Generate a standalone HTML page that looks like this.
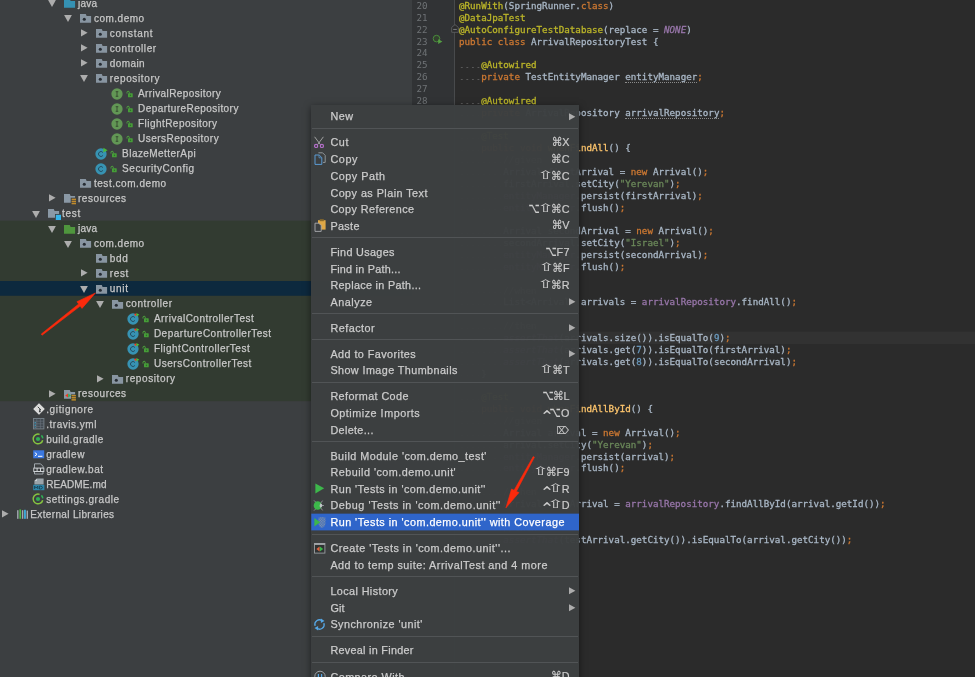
<!DOCTYPE html>
<html lang="en"><head><meta charset="utf-8"><title>IntelliJ IDEA - Run Tests with Coverage</title>
<style>
html,body{margin:0;padding:0;background:#3c3f41;}
body{width:975px;height:677px;overflow:hidden;position:relative;font-family:"Liberation Sans",sans-serif;}
.i{position:absolute;overflow:visible;}
#tree{will-change:transform;position:absolute;left:0;top:0;width:412px;height:677px;background:#3c3f41;overflow:hidden;}
.grn{position:absolute;left:0;width:412px;background:#323b31;}
.sel{position:absolute;left:0;width:412px;background:#0d293e;}
.t{position:absolute;font-size:10px;line-height:15px;height:15px;color:#c8c8c8;white-space:pre;-webkit-text-stroke:0.25px #c8c8c8;}
#ed{will-change:transform;position:absolute;left:412px;top:0;width:563px;height:677px;background:#2b2b2b;overflow:hidden;}
#ed .i, #ed .cl, #ed .ln, #ed .caret, #ed .gut, #ed .gl{margin-left:-412px;}
.gut{position:absolute;left:412px;top:0;width:43px;height:677px;background:#313335;}
.gl{position:absolute;left:454.3px;top:0;width:1px;height:677px;background:#484a4c;}
.caret{position:absolute;left:455.3px;width:520px;height:12.06px;background:#323232;}
.ln{position:absolute;left:416.4px;font-family:"DejaVu Sans Mono","Liberation Mono",monospace;font-size:9.2px;line-height:11.86px;color:#6f7376;}
.cl{position:absolute;left:459.0px;margin:0;font-family:"DejaVu Sans Mono","Liberation Mono",monospace;font-size:9.2px;line-height:11.86px;height:11.86px;color:#a9b7c6;white-space:pre;-webkit-text-stroke:0.3px;letter-spacing:0.009px;}
.k{color:#cc7832} .a{color:#bbb529} .s{color:#6a8759} .n{color:#6897bb} .f{color:#9876aa} .m{color:#ffc66d} .c{color:#808080} .x{color:#a9b7c6}
.ci{color:#9876aa;font-style:italic} .d{display:inline-block;height:11.86px;vertical-align:top;background-image:radial-gradient(circle at 50% 71%, #5a5a5a 0.45px, rgba(90,90,90,0) 0.95px);background-size:5.547px 100%;background-repeat:repeat-x;}
.u{color:#a9b7c6;border-bottom:1px dotted #8a8a8a;}
#menu{position:absolute;left:311.3px;top:104.6px;width:267.7px;height:592.4px;background:rgba(60,63,65,0.975);box-shadow:0 2px 7px rgba(0,0,0,0.5);}
#mc{will-change:transform;position:absolute;left:0;top:0;width:975px;height:677px;overflow:hidden;}
.sep{position:absolute;left:312.3px;width:265.7px;height:1px;background:#515456;}
.msel{position:absolute;left:311.3px;width:267.7px;height:16.85px;background:#2f65ca;}
.ml{position:absolute;left:330.4px;font-size:10.8px;line-height:16px;height:16px;color:#cccccc;white-space:pre;-webkit-text-stroke:0.25px #cccccc;}
.ml.w{color:#ffffff;-webkit-text-stroke:0.25px #ffffff;}
.ms{position:absolute;right:405.2px;font-family:"Liberation Sans","DejaVu Sans",sans-serif;font-size:10.8px;line-height:16px;height:16px;color:#cccccc;white-space:pre;letter-spacing:0.3px;-webkit-text-stroke:0.2px #cccccc;}
.g{display:inline-block;font-family:"DejaVu Sans",sans-serif;letter-spacing:0;line-height:16px;vertical-align:top;-webkit-text-stroke:0.15px #cccccc;}
.g1{transform:translateY(0.3px) scale(1.95,1.05);margin:0 1.6px 0 1.1px;-webkit-text-stroke:0;}
.g4+.g1{margin-left:0.5px;}
.g2{transform:translateY(0.8px) scale(1.0,1.12);margin:0 -0.2px 0 -0.4px;}
.g3{transform:translateY(0.5px) scale(0.9,1.3);margin:0 -0.8px 0 -1.0px;}
.g4{transform:translate(0.4px,3.7px) scale(1.55,1.35);margin:0 -0.2px 0 0.2px;}
.g5{transform:translateY(1.6px) scale(0.8,1);margin:0 -0.8px 0 -1.6px;}
</style></head><body>
<div id="tree">
<svg class="i" style="left:0;top:0" width="412" height="677" viewBox="0 0 412 677"><rect x="0" y="220.7" width="412" height="180.5" fill="#323b31"/><rect x="0" y="281" width="412" height="14.75" fill="#0d293e"/></svg>
<svg class="i" style="left:48.00px;top:0.20px" width="8" height="7" viewBox="0 0 8 7"><path d="M0.1 0H7.9L4 7Z" fill="#adadad"/></svg>
<svg class="i" style="left:64.30px;top:-1.05px" width="12" height="10" viewBox="0 0 12 10"><path d="M0 0H5.8L6.6 2H11.1V8.85H0Z" fill="#3591b3"/></svg>
<span class="t" style="left:78.00px;top:-4.30px;letter-spacing:0.247px">java</span>
<svg class="i" style="left:63.90px;top:15.23px" width="8" height="7" viewBox="0 0 8 7"><path d="M0.1 0H7.9L4 7Z" fill="#adadad"/></svg>
<svg class="i" style="left:80.20px;top:13.98px" width="12" height="10" viewBox="0 0 12 10"><path d="M0 0H5.8L6.6 2H11.1V8.85H0Z" fill="#8895a1"/><circle cx="4.3" cy="5.25" r="1.55" fill="#262c33"/></svg>
<span class="t" style="left:93.90px;top:10.73px;letter-spacing:0.503px">com.demo</span>
<svg class="i" style="left:81.10px;top:28.96px" width="7" height="8" viewBox="0 0 7 8"><path d="M0 0.2L6.6 3.7L0 7.4Z" fill="#adadad"/></svg>
<svg class="i" style="left:96.10px;top:29.01px" width="12" height="10" viewBox="0 0 12 10"><path d="M0 0H5.8L6.6 2H11.1V8.85H0Z" fill="#8895a1"/><circle cx="4.3" cy="5.25" r="1.55" fill="#262c33"/></svg>
<span class="t" style="left:109.80px;top:25.76px;letter-spacing:0.700px">constant</span>
<svg class="i" style="left:81.10px;top:43.99px" width="7" height="8" viewBox="0 0 7 8"><path d="M0 0.2L6.6 3.7L0 7.4Z" fill="#adadad"/></svg>
<svg class="i" style="left:96.10px;top:44.04px" width="12" height="10" viewBox="0 0 12 10"><path d="M0 0H5.8L6.6 2H11.1V8.85H0Z" fill="#8895a1"/><circle cx="4.3" cy="5.25" r="1.55" fill="#262c33"/></svg>
<span class="t" style="left:109.80px;top:40.79px;letter-spacing:0.574px">controller</span>
<svg class="i" style="left:81.10px;top:59.02px" width="7" height="8" viewBox="0 0 7 8"><path d="M0 0.2L6.6 3.7L0 7.4Z" fill="#adadad"/></svg>
<svg class="i" style="left:96.10px;top:59.07px" width="12" height="10" viewBox="0 0 12 10"><path d="M0 0H5.8L6.6 2H11.1V8.85H0Z" fill="#8895a1"/><circle cx="4.3" cy="5.25" r="1.55" fill="#262c33"/></svg>
<span class="t" style="left:109.80px;top:55.82px;letter-spacing:0.418px">domain</span>
<svg class="i" style="left:79.80px;top:75.35px" width="8" height="7" viewBox="0 0 8 7"><path d="M0.1 0H7.9L4 7Z" fill="#adadad"/></svg>
<svg class="i" style="left:96.10px;top:74.10px" width="12" height="10" viewBox="0 0 12 10"><path d="M0 0H5.8L6.6 2H11.1V8.85H0Z" fill="#8895a1"/><circle cx="4.3" cy="5.25" r="1.55" fill="#262c33"/></svg>
<span class="t" style="left:109.80px;top:70.85px;letter-spacing:0.633px">repository</span>
<svg class="i" style="left:109.85px;top:86.53px" width="14" height="14" viewBox="-7 -7 14 14"><circle cx="0" cy="0" r="5.65" fill="#629755"/><path d="M-1.3 -2.3H1.3M-1.3 2.3H1.3M0 -2.3V2.3" stroke="#2c3a27" stroke-width="0.75" fill="none"/></svg>
<svg class="i" style="left:116.85px;top:93.53px" width="20" height="10" viewBox="0 0 20 10"><path d="M10.0 -0.5V-1.6A1.15 1.15 0 0 1 12.3 -1.6V-0.4" stroke="#4fa53e" stroke-width="1" fill="none"/><rect x="11.0" y="-0.8" width="4.7" height="4.1" rx="0.6" fill="#479f39"/><rect x="12.8" y="0.6" width="1.3" height="1.5" fill="#2f6f2a"/></svg>
<span class="t" style="left:138.00px;top:85.88px;letter-spacing:0.410px">ArrivalRepository</span>
<svg class="i" style="left:109.85px;top:101.56px" width="14" height="14" viewBox="-7 -7 14 14"><circle cx="0" cy="0" r="5.65" fill="#629755"/><path d="M-1.3 -2.3H1.3M-1.3 2.3H1.3M0 -2.3V2.3" stroke="#2c3a27" stroke-width="0.75" fill="none"/></svg>
<svg class="i" style="left:116.85px;top:108.56px" width="20" height="10" viewBox="0 0 20 10"><path d="M10.0 -0.5V-1.6A1.15 1.15 0 0 1 12.3 -1.6V-0.4" stroke="#4fa53e" stroke-width="1" fill="none"/><rect x="11.0" y="-0.8" width="4.7" height="4.1" rx="0.6" fill="#479f39"/><rect x="12.8" y="0.6" width="1.3" height="1.5" fill="#2f6f2a"/></svg>
<span class="t" style="left:138.00px;top:100.91px;letter-spacing:0.452px">DepartureRepository</span>
<svg class="i" style="left:109.85px;top:116.59px" width="14" height="14" viewBox="-7 -7 14 14"><circle cx="0" cy="0" r="5.65" fill="#629755"/><path d="M-1.3 -2.3H1.3M-1.3 2.3H1.3M0 -2.3V2.3" stroke="#2c3a27" stroke-width="0.75" fill="none"/></svg>
<svg class="i" style="left:116.85px;top:123.59px" width="20" height="10" viewBox="0 0 20 10"><path d="M10.0 -0.5V-1.6A1.15 1.15 0 0 1 12.3 -1.6V-0.4" stroke="#4fa53e" stroke-width="1" fill="none"/><rect x="11.0" y="-0.8" width="4.7" height="4.1" rx="0.6" fill="#479f39"/><rect x="12.8" y="0.6" width="1.3" height="1.5" fill="#2f6f2a"/></svg>
<span class="t" style="left:138.00px;top:115.94px;letter-spacing:0.456px">FlightRepository</span>
<svg class="i" style="left:109.85px;top:131.62px" width="14" height="14" viewBox="-7 -7 14 14"><circle cx="0" cy="0" r="5.65" fill="#629755"/><path d="M-1.3 -2.3H1.3M-1.3 2.3H1.3M0 -2.3V2.3" stroke="#2c3a27" stroke-width="0.75" fill="none"/></svg>
<svg class="i" style="left:116.85px;top:138.62px" width="20" height="10" viewBox="0 0 20 10"><path d="M10.0 -0.5V-1.6A1.15 1.15 0 0 1 12.3 -1.6V-0.4" stroke="#4fa53e" stroke-width="1" fill="none"/><rect x="11.0" y="-0.8" width="4.7" height="4.1" rx="0.6" fill="#479f39"/><rect x="12.8" y="0.6" width="1.3" height="1.5" fill="#2f6f2a"/></svg>
<span class="t" style="left:138.00px;top:130.97px;letter-spacing:0.484px">UsersRepository</span>
<svg class="i" style="left:93.95px;top:146.65px" width="14" height="14" viewBox="-7 -7 14 14"><circle cx="0" cy="0" r="5.65" fill="#3793b3"/><path d="M1.9 -1.5A2.45 2.45 0 1 0 1.9 1.5" stroke="#25485a" stroke-width="0.95" fill="none"/><path d="M2.4 -6.3L6.6 -3.7L2.4 -1.4Z" fill="#4cb838"/></svg>
<svg class="i" style="left:100.95px;top:153.65px" width="20" height="10" viewBox="0 0 20 10"><path d="M10.0 -0.5V-1.6A1.15 1.15 0 0 1 12.3 -1.6V-0.4" stroke="#4fa53e" stroke-width="1" fill="none"/><rect x="11.0" y="-0.8" width="4.7" height="4.1" rx="0.6" fill="#479f39"/><rect x="12.8" y="0.6" width="1.3" height="1.5" fill="#2f6f2a"/></svg>
<span class="t" style="left:122.10px;top:146.00px;letter-spacing:0.446px">BlazeMetterApi</span>
<svg class="i" style="left:93.95px;top:161.68px" width="14" height="14" viewBox="-7 -7 14 14"><circle cx="0" cy="0" r="5.65" fill="#3793b3"/><path d="M1.9 -1.5A2.45 2.45 0 1 0 1.9 1.5" stroke="#25485a" stroke-width="0.95" fill="none"/></svg>
<svg class="i" style="left:100.95px;top:168.68px" width="20" height="10" viewBox="0 0 20 10"><path d="M10.0 -0.5V-1.6A1.15 1.15 0 0 1 12.3 -1.6V-0.4" stroke="#4fa53e" stroke-width="1" fill="none"/><rect x="11.0" y="-0.8" width="4.7" height="4.1" rx="0.6" fill="#479f39"/><rect x="12.8" y="0.6" width="1.3" height="1.5" fill="#2f6f2a"/></svg>
<span class="t" style="left:122.10px;top:161.03px;letter-spacing:0.537px">SecurityConfig</span>
<svg class="i" style="left:80.20px;top:179.31px" width="12" height="10" viewBox="0 0 12 10"><path d="M0 0H5.8L6.6 2H11.1V8.85H0Z" fill="#8895a1"/><circle cx="4.3" cy="5.25" r="1.55" fill="#262c33"/></svg>
<span class="t" style="left:93.90px;top:176.06px;letter-spacing:0.551px">test.com.demo</span>
<svg class="i" style="left:49.30px;top:194.29px" width="7" height="8" viewBox="0 0 7 8"><path d="M0 0.2L6.6 3.7L0 7.4Z" fill="#adadad"/></svg>
<svg class="i" style="left:64.30px;top:194.34px" width="12" height="10" viewBox="0 0 12 10"><path d="M0 0H5.8L6.6 2H11.1V8.85H0Z" fill="#8a98a5"/></svg>
<svg class="i" style="left:71.00px;top:197.99px" width="6" height="7" viewBox="0 0 6 7"><rect x="-0.3" y="-0.3" width="5.6" height="7" fill="#3c3f41"/><rect x="0.6" y="0.6" width="4.4" height="1.5" fill="#c08b2d"/><rect x="0.6" y="2.7" width="4.4" height="1.5" fill="#c08b2d"/><rect x="0.6" y="4.8" width="4.4" height="1.5" fill="#c08b2d"/></svg>
<span class="t" style="left:78.00px;top:191.09px;letter-spacing:0.524px">resources</span>
<svg class="i" style="left:32.10px;top:210.62px" width="8" height="7" viewBox="0 0 8 7"><path d="M0.1 0H7.9L4 7Z" fill="#adadad"/></svg>
<svg class="i" style="left:48.40px;top:209.37px" width="12" height="10" viewBox="0 0 12 10"><path d="M0 0H5.8L6.6 2H11.1V8.85H0Z" fill="#8a98a5"/></svg>
<svg class="i" style="left:54.70px;top:214.32px" width="7" height="7" viewBox="0 0 7 7"><rect width="6.6" height="6.6" fill="#3c3f41"/><rect x="0.8" y="0.8" width="5.2" height="5.2" fill="#35b4e9"/></svg>
<span class="t" style="left:62.10px;top:206.12px;letter-spacing:0.700px">test</span>
<svg class="i" style="left:48.00px;top:225.65px" width="8" height="7" viewBox="0 0 8 7"><path d="M0.1 0H7.9L4 7Z" fill="#adadad"/></svg>
<svg class="i" style="left:64.30px;top:224.60px" width="12" height="10" viewBox="0 0 12 10"><path d="M0 0H5.8L6.6 2H11.1V8.85H0Z" fill="#4f963d"/></svg>
<span class="t" style="left:78.00px;top:221.15px;letter-spacing:0.247px">java</span>
<svg class="i" style="left:63.90px;top:240.68px" width="8" height="7" viewBox="0 0 8 7"><path d="M0.1 0H7.9L4 7Z" fill="#adadad"/></svg>
<svg class="i" style="left:80.20px;top:239.43px" width="12" height="10" viewBox="0 0 12 10"><path d="M0 0H5.8L6.6 2H11.1V8.85H0Z" fill="#8895a1"/><circle cx="4.3" cy="5.25" r="1.55" fill="#262c33"/></svg>
<span class="t" style="left:93.90px;top:236.18px;letter-spacing:0.503px">com.demo</span>
<svg class="i" style="left:96.10px;top:254.46px" width="12" height="10" viewBox="0 0 12 10"><path d="M0 0H5.8L6.6 2H11.1V8.85H0Z" fill="#8895a1"/><circle cx="4.3" cy="5.25" r="1.55" fill="#262c33"/></svg>
<span class="t" style="left:109.80px;top:251.21px;letter-spacing:0.700px">bdd</span>
<svg class="i" style="left:81.10px;top:269.44px" width="7" height="8" viewBox="0 0 7 8"><path d="M0 0.2L6.6 3.7L0 7.4Z" fill="#adadad"/></svg>
<svg class="i" style="left:96.10px;top:269.49px" width="12" height="10" viewBox="0 0 12 10"><path d="M0 0H5.8L6.6 2H11.1V8.85H0Z" fill="#8895a1"/><circle cx="4.3" cy="5.25" r="1.55" fill="#262c33"/></svg>
<span class="t" style="left:109.80px;top:266.24px;letter-spacing:0.644px">rest</span>
<svg class="i" style="left:79.80px;top:285.77px" width="8" height="7" viewBox="0 0 8 7"><path d="M0.1 0H7.9L4 7Z" fill="#adadad"/></svg>
<svg class="i" style="left:96.10px;top:284.52px" width="12" height="10" viewBox="0 0 12 10"><path d="M0 0H5.8L6.6 2H11.1V8.85H0Z" fill="#8895a1"/><circle cx="4.3" cy="5.25" r="1.55" fill="#262c33"/></svg>
<span class="t" style="left:109.80px;top:281.27px;letter-spacing:0.700px">unit</span>
<svg class="i" style="left:95.70px;top:300.80px" width="8" height="7" viewBox="0 0 8 7"><path d="M0.1 0H7.9L4 7Z" fill="#adadad"/></svg>
<svg class="i" style="left:112.00px;top:299.55px" width="12" height="10" viewBox="0 0 12 10"><path d="M0 0H5.8L6.6 2H11.1V8.85H0Z" fill="#8895a1"/><circle cx="4.3" cy="5.25" r="1.55" fill="#262c33"/></svg>
<span class="t" style="left:125.70px;top:296.30px;letter-spacing:0.586px">controller</span>
<svg class="i" style="left:125.75px;top:311.98px" width="14" height="14" viewBox="-7 -7 14 14"><circle cx="0" cy="0" r="5.65" fill="#3793b3"/><path d="M1.9 -1.5A2.45 2.45 0 1 0 1.9 1.5" stroke="#25485a" stroke-width="0.95" fill="none"/><path d="M0.9 -4.3L3.4 -6L3.4 -2.7Z" fill="#ee3b22"/><path d="M3.5 -6.1L6.3 -4.2L3.5 -2.5Z" fill="#4cc23a"/></svg>
<svg class="i" style="left:132.75px;top:318.98px" width="20" height="10" viewBox="0 0 20 10"><path d="M10.0 -0.5V-1.6A1.15 1.15 0 0 1 12.3 -1.6V-0.4" stroke="#4fa53e" stroke-width="1" fill="none"/><rect x="11.0" y="-0.8" width="4.7" height="4.1" rx="0.6" fill="#479f39"/><rect x="12.8" y="0.6" width="1.3" height="1.5" fill="#2f6f2a"/></svg>
<span class="t" style="left:153.90px;top:311.33px;letter-spacing:0.489px">ArrivalControllerTest</span>
<svg class="i" style="left:125.75px;top:327.01px" width="14" height="14" viewBox="-7 -7 14 14"><circle cx="0" cy="0" r="5.65" fill="#3793b3"/><path d="M1.9 -1.5A2.45 2.45 0 1 0 1.9 1.5" stroke="#25485a" stroke-width="0.95" fill="none"/><path d="M0.9 -4.3L3.4 -6L3.4 -2.7Z" fill="#ee3b22"/><path d="M3.5 -6.1L6.3 -4.2L3.5 -2.5Z" fill="#4cc23a"/></svg>
<svg class="i" style="left:132.75px;top:334.01px" width="20" height="10" viewBox="0 0 20 10"><path d="M10.0 -0.5V-1.6A1.15 1.15 0 0 1 12.3 -1.6V-0.4" stroke="#4fa53e" stroke-width="1" fill="none"/><rect x="11.0" y="-0.8" width="4.7" height="4.1" rx="0.6" fill="#479f39"/><rect x="12.8" y="0.6" width="1.3" height="1.5" fill="#2f6f2a"/></svg>
<span class="t" style="left:153.90px;top:326.36px;letter-spacing:0.502px">DepartureControllerTest</span>
<svg class="i" style="left:125.75px;top:342.04px" width="14" height="14" viewBox="-7 -7 14 14"><circle cx="0" cy="0" r="5.65" fill="#3793b3"/><path d="M1.9 -1.5A2.45 2.45 0 1 0 1.9 1.5" stroke="#25485a" stroke-width="0.95" fill="none"/><path d="M0.9 -4.3L3.4 -6L3.4 -2.7Z" fill="#ee3b22"/><path d="M3.5 -6.1L6.3 -4.2L3.5 -2.5Z" fill="#4cc23a"/></svg>
<svg class="i" style="left:132.75px;top:349.04px" width="20" height="10" viewBox="0 0 20 10"><path d="M10.0 -0.5V-1.6A1.15 1.15 0 0 1 12.3 -1.6V-0.4" stroke="#4fa53e" stroke-width="1" fill="none"/><rect x="11.0" y="-0.8" width="4.7" height="4.1" rx="0.6" fill="#479f39"/><rect x="12.8" y="0.6" width="1.3" height="1.5" fill="#2f6f2a"/></svg>
<span class="t" style="left:153.90px;top:341.39px;letter-spacing:0.508px">FlightControllerTest</span>
<svg class="i" style="left:125.75px;top:357.07px" width="14" height="14" viewBox="-7 -7 14 14"><circle cx="0" cy="0" r="5.65" fill="#3793b3"/><path d="M1.9 -1.5A2.45 2.45 0 1 0 1.9 1.5" stroke="#25485a" stroke-width="0.95" fill="none"/><path d="M0.9 -4.3L3.4 -6L3.4 -2.7Z" fill="#ee3b22"/><path d="M3.5 -6.1L6.3 -4.2L3.5 -2.5Z" fill="#4cc23a"/></svg>
<svg class="i" style="left:132.75px;top:364.07px" width="20" height="10" viewBox="0 0 20 10"><path d="M10.0 -0.5V-1.6A1.15 1.15 0 0 1 12.3 -1.6V-0.4" stroke="#4fa53e" stroke-width="1" fill="none"/><rect x="11.0" y="-0.8" width="4.7" height="4.1" rx="0.6" fill="#479f39"/><rect x="12.8" y="0.6" width="1.3" height="1.5" fill="#2f6f2a"/></svg>
<span class="t" style="left:153.90px;top:356.42px;letter-spacing:0.539px">UsersControllerTest</span>
<svg class="i" style="left:97.00px;top:374.65px" width="7" height="8" viewBox="0 0 7 8"><path d="M0 0.2L6.6 3.7L0 7.4Z" fill="#adadad"/></svg>
<svg class="i" style="left:112.00px;top:374.70px" width="12" height="10" viewBox="0 0 12 10"><path d="M0 0H5.8L6.6 2H11.1V8.85H0Z" fill="#8895a1"/><circle cx="4.3" cy="5.25" r="1.55" fill="#262c33"/></svg>
<span class="t" style="left:125.70px;top:371.45px;letter-spacing:0.612px">repository</span>
<svg class="i" style="left:49.30px;top:389.68px" width="7" height="8" viewBox="0 0 7 8"><path d="M0 0.2L6.6 3.7L0 7.4Z" fill="#adadad"/></svg>
<svg class="i" style="left:64.30px;top:389.53px" width="12" height="10" viewBox="0 0 12 10"><path d="M0 0H5.8L6.6 2H11.1V8.85H0Z" fill="#8a98a5"/></svg>
<svg class="i" style="left:64.30px;top:389.88px" width="14" height="12" viewBox="0 0 14 12"><path d="M4 3.4L1.2 5.4L4 7.4Z" fill="#ee3b22"/><path d="M4.2 3.4L7 5.4L4.2 7.4Z" fill="#2fae55"/><rect x="7" y="4.4" width="5.4" height="6.6" fill="#323b31"/><rect x="7.5" y="4.9" width="4.4" height="1.5" fill="#c08b2d"/><rect x="7.5" y="7" width="4.4" height="1.5" fill="#c08b2d"/><rect x="7.5" y="9.1" width="4.4" height="1.5" fill="#c08b2d"/></svg>
<span class="t" style="left:78.00px;top:386.48px;letter-spacing:0.524px">resources</span>
<svg class="i" style="left:32.50px;top:403.01px" width="12" height="12" viewBox="-6 -6 12 12"><rect x="-4.2" y="-4.2" width="8.4" height="8.4" rx="0.8" transform="rotate(45)" fill="#dadada"/><path d="M-1.2 -2.2L0.8 -0.2V2.6M0.8 0L2 1" stroke="#3c3f41" stroke-width="1" fill="none"/><circle cx="0.8" cy="2.4" r="0.9" fill="#3c3f41"/></svg>
<span class="t" style="left:46.20px;top:401.51px;letter-spacing:0.641px">.gitignore</span>
<svg class="i" style="left:32.50px;top:418.44px" width="12" height="12" viewBox="0 0 12 12"><rect x="0.5" y="0.5" width="10.4" height="10.4" fill="#424a51" stroke="#78838b" stroke-width="0.9"/><path d="M3.8 0.5V11M7.4 0.5V11M0.5 3.2H11M0.5 5.8H11M0.5 8.4H11" stroke="#6a747c" stroke-width="0.6"/><path d="M2.2 4V10" stroke="#3f9fc4" stroke-width="1.2" stroke-dasharray="1.3 1.3"/></svg>
<span class="t" style="left:46.20px;top:416.54px;letter-spacing:0.521px">.travis.yml</span>
<svg class="i" style="left:31.90px;top:433.17px" width="12" height="12" viewBox="-6 -6 12 12"><path d="M1.6 -4.6A4.85 4.85 0 1 0 4.7 1.2" fill="none" stroke="#86c540" stroke-width="1.5"/><path d="M3.4 -3.6A4.85 4.85 0 0 1 4.8 -0.6" fill="none" stroke="#2fae55" stroke-width="1.5"/><circle r="2.1" fill="#2fae55"/></svg>
<span class="t" style="left:46.20px;top:431.57px;letter-spacing:0.499px">build.gradle</span>
<svg class="i" style="left:32.50px;top:449.90px" width="12" height="9" viewBox="0 0 12 9"><rect x="0.2" y="0.3" width="11" height="8" fill="#3b78e0"/><path d="M1.8 2.6L4 4.3L1.8 6" stroke="#fff" stroke-width="1" fill="none"/><path d="M5 6.3H9.4" stroke="#fff" stroke-width="1"/></svg>
<span class="t" style="left:46.20px;top:446.60px;letter-spacing:0.530px">gradlew</span>
<svg class="i" style="left:32.50px;top:463.13px" width="12" height="12" viewBox="0 0 12 12"><path d="M1.5 0.8H7.5L10 3.3V11H1.5Z" fill="none" stroke="#aab2b8" stroke-width="0.9"/><rect x="0.3" y="4.6" width="11" height="4.4" fill="#d0d4d7"/><rect x="1.2" y="5.6" width="2.4" height="2.4" fill="#3c3f41"/><rect x="4.6" y="5.6" width="2.4" height="2.4" fill="#3c3f41"/><rect x="8" y="5.6" width="2.4" height="2.4" fill="#3c3f41"/></svg>
<span class="t" style="left:46.20px;top:461.63px;letter-spacing:0.576px">gradlew.bat</span>
<svg class="i" style="left:32.50px;top:477.76px" width="12" height="13" viewBox="0 0 12 13"><path d="M4 0.4H10.6V6.4H1.4V3Z" fill="#9aa3a9"/><path d="M1.4 3L4 0.4V3Z" fill="#c9ced2"/><rect x="0.2" y="6.8" width="11.2" height="5.4" fill="#2f86a8"/><path d="M1.6 11V8.2L3.2 10L4.8 8.2V11M6.4 8.2V11H7.6Q9.4 11 9.4 9.6Q9.4 8.2 7.6 8.2Z" stroke="#16384a" stroke-width="0.8" fill="none"/></svg>
<span class="t" style="left:46.20px;top:476.66px;letter-spacing:0.100px">README.md</span>
<svg class="i" style="left:31.90px;top:493.29px" width="12" height="12" viewBox="-6 -6 12 12"><path d="M1.6 -4.6A4.85 4.85 0 1 0 4.7 1.2" fill="none" stroke="#86c540" stroke-width="1.5"/><path d="M3.4 -3.6A4.85 4.85 0 0 1 4.8 -0.6" fill="none" stroke="#2fae55" stroke-width="1.5"/><circle r="2.1" fill="#2fae55"/></svg>
<span class="t" style="left:46.20px;top:491.69px;letter-spacing:0.562px">settings.gradle</span>
<svg class="i" style="left:1.70px;top:509.92px" width="7" height="8" viewBox="0 0 7 8"><path d="M0 0.2L6.6 3.7L0 7.4Z" fill="#adadad"/></svg>
<svg class="i" style="left:16.60px;top:509.22px" width="12" height="10" viewBox="0 0 12 10"><rect x="0.1" y="1.2" width="1.4" height="8.6" fill="#a3abb2"/><rect x="2.4" y="0.4" width="1.6" height="9.4" fill="#4fb848"/><rect x="4.9" y="1.2" width="1.4" height="8.6" fill="#a3abb2"/><rect x="7.1" y="0.8" width="1.7" height="9" fill="#3fb4e6"/><rect x="9.6" y="1.6" width="1.4" height="8.2" fill="#a3abb2"/></svg>
<span class="t" style="left:30.30px;top:506.72px;letter-spacing:0.352px">External Libraries</span>
</div>
<div id="ed">
<div class="gut"></div><div class="gl"></div>
<svg class="i" style="left:412px;top:0" width="563" height="677" viewBox="412 0 563 677"><rect x="454.8" y="331.7" width="521" height="12.3" fill="#323232"/></svg>
<span class="ln" style="top:-0.08px">20</span>
<pre class="cl" style="top:-0.08px"><span class="a">@RunWith</span><span class="x">(SpringRunner.</span><span class="k">class</span><span class="x">)</span></pre>
<span class="ln" style="top:11.78px">21</span>
<pre class="cl" style="top:11.78px"><span class="a">@DataJpaTest</span></pre>
<span class="ln" style="top:23.64px">22</span>
<pre class="cl" style="top:23.64px"><span class="a">@AutoConfigureTestDatabase</span><span class="x">(replace = </span><span class="ci">NONE</span><span class="x">)</span></pre>
<span class="ln" style="top:35.50px">23</span>
<pre class="cl" style="top:35.50px"><span class="k">public class </span><span class="x">ArrivalRepositoryTest {</span></pre>
<span class="ln" style="top:47.36px">24</span>
<span class="ln" style="top:59.22px">25</span>
<pre class="cl" style="top:59.22px"><span class="d">    </span><span class="a">@Autowired</span></pre>
<span class="ln" style="top:71.08px">26</span>
<pre class="cl" style="top:71.08px"><span class="d">    </span><span class="k">private </span><span class="x">TestEntityManager </span><span class="u">entityManager</span><span class="k">;</span></pre>
<span class="ln" style="top:82.94px">27</span>
<span class="ln" style="top:94.80px">28</span>
<pre class="cl" style="top:94.80px"><span class="d">    </span><span class="a">@Autowired</span></pre>
<pre class="cl" style="top:106.66px"><span class="d">    </span><span class="k">private </span><span class="x">ArrivalRepository </span><span class="u">arrivalRepository</span><span class="k">;</span></pre>
<pre class="cl" style="top:130.38px"><span class="d">    </span><span class="a">@Test</span></pre>
<pre class="cl" style="top:142.24px"><span class="d">    </span><span class="k">public void </span><span class="m">whenFindAll</span><span class="x">() {</span></pre>
<pre class="cl" style="top:154.10px"><span class="d">        </span><span class="c">//given</span></pre>
<pre class="cl" style="top:165.96px"><span class="d">        </span><span class="x">Arrival firstArrival = </span><span class="k">new </span><span class="x">Arrival()</span><span class="k">;</span></pre>
<pre class="cl" style="top:177.82px"><span class="d">        </span><span class="x">firstArrival.setCity(</span><span class="s">&quot;Yerevan&quot;</span><span class="x">)</span><span class="k">;</span></pre>
<pre class="cl" style="top:189.68px"><span class="d">        </span><span class="f">entityManager</span><span class="x">.persist(firstArrival)</span><span class="k">;</span></pre>
<pre class="cl" style="top:201.54px"><span class="d">        </span><span class="f">entityManager</span><span class="x">.flush()</span><span class="k">;</span></pre>
<pre class="cl" style="top:225.26px"><span class="d">        </span><span class="x">Arrival secondArrival = </span><span class="k">new </span><span class="x">Arrival()</span><span class="k">;</span></pre>
<pre class="cl" style="top:237.12px"><span class="d">        </span><span class="x">secondArrival.setCity(</span><span class="s">&quot;Israel&quot;</span><span class="x">)</span><span class="k">;</span></pre>
<pre class="cl" style="top:248.98px"><span class="d">        </span><span class="f">entityManager</span><span class="x">.persist(secondArrival)</span><span class="k">;</span></pre>
<pre class="cl" style="top:260.84px"><span class="d">        </span><span class="f">entityManager</span><span class="x">.flush()</span><span class="k">;</span></pre>
<pre class="cl" style="top:284.56px"><span class="d">        </span><span class="c">//when</span></pre>
<pre class="cl" style="top:296.42px"><span class="d">        </span><span class="x">List&lt;Arrival&gt; arrivals = </span><span class="f">arrivalRepository</span><span class="x">.findAll()</span><span class="k">;</span></pre>
<pre class="cl" style="top:320.14px"><span class="d">        </span><span class="c">//then</span></pre>
<pre class="cl" style="top:332.00px"><span class="d">        </span><span class="ci">assertThat</span><span class="x">(arrivals.size()).isEqualTo(</span><span class="n">9</span><span class="x">)</span><span class="k">;</span></pre>
<pre class="cl" style="top:343.86px"><span class="d">        </span><span class="ci">assertThat</span><span class="x">(arrivals.get(</span><span class="n">7</span><span class="x">)).isEqualTo(firstArrival)</span><span class="k">;</span></pre>
<pre class="cl" style="top:355.72px"><span class="d">        </span><span class="ci">assertThat</span><span class="x">(arrivals.get(</span><span class="n">8</span><span class="x">)).isEqualTo(secondArrival)</span><span class="k">;</span></pre>
<pre class="cl" style="top:367.58px"><span class="d">    </span><span class="x">}</span></pre>
<pre class="cl" style="top:391.30px"><span class="d">    </span><span class="a">@Test</span></pre>
<pre class="cl" style="top:403.16px"><span class="d">    </span><span class="k">public void </span><span class="m">whenFindAllById</span><span class="x">() {</span></pre>
<pre class="cl" style="top:415.02px"><span class="d">        </span><span class="c">//given</span></pre>
<pre class="cl" style="top:426.88px"><span class="d">        </span><span class="x">Arrival arrival = </span><span class="k">new </span><span class="x">Arrival()</span><span class="k">;</span></pre>
<pre class="cl" style="top:438.74px"><span class="d">        </span><span class="x">arrival.setCity(</span><span class="s">&quot;Yerevan&quot;</span><span class="x">)</span><span class="k">;</span></pre>
<pre class="cl" style="top:450.60px"><span class="d">        </span><span class="f">entityManager</span><span class="x">.persist(arrival)</span><span class="k">;</span></pre>
<pre class="cl" style="top:462.46px"><span class="d">        </span><span class="f">entityManager</span><span class="x">.flush()</span><span class="k">;</span></pre>
<pre class="cl" style="top:486.18px"><span class="d">        </span><span class="c">//when</span></pre>
<pre class="cl" style="top:498.04px"><span class="d">        </span><span class="x">Arrival testArrival = </span><span class="f">arrivalRepository</span><span class="x">.findAllById(arrival.getId())</span><span class="k">;</span></pre>
<pre class="cl" style="top:521.76px"><span class="d">        </span><span class="c">//then</span></pre>
<pre class="cl" style="top:533.62px"><span class="d">        </span><span class="ci">assertThat</span><span class="x">(testArrival.getCity()).isEqualTo(arrival.getCity())</span><span class="k">;</span></pre>
<svg class="i" style="left:432px;top:34.20px" width="12" height="12" viewBox="0 0 12 12"><circle cx="4.5" cy="4.6" r="3.3" fill="#33402f" stroke="#4a8f3c" stroke-width="0.95"/><path d="M6.2 5.2L10.4 7.6L6.2 10Z" fill="#55a043"/></svg>
<svg class="i" style="left:450.7px;top:23.64px" width="8" height="9" viewBox="0 0 8 9"><path d="M0.7 3.4L4 0.6L7.3 3.4V8.3H0.7Z" fill="#2b2b2b" stroke="#5c5f61" stroke-width="0.9"/><path d="M2.2 5.4H5.8" stroke="#85888a" stroke-width="0.9"/></svg>
</div>
<div id="menu"></div>
<div id="mc">
<span class="ml" style="top:108.20px;letter-spacing:0.550px">New</span>
<svg class="i" style="left:568.6px;top:112.60px" width="7" height="8" viewBox="0 0 7 8"><path d="M0 0.2L6.4 3.7L0 7.2Z" fill="#adadad"/></svg>
<div class="sep" style="top:127.90px"></div>
<svg class="i" style="left:313.0px;top:135.60px" width="13" height="13" viewBox="0 0 13 13"><path d="M1.6 0.8L7.4 8.6M10.4 0.8L4.6 8.6" stroke="#b4b4b4" stroke-width="0.85" fill="none"/><circle cx="3.1" cy="9.9" r="1.6" fill="none" stroke="#b56fcb" stroke-width="1.15"/><circle cx="8.9" cy="9.9" r="1.6" fill="none" stroke="#b56fcb" stroke-width="1.15"/></svg>
<span class="ml" style="top:134.20px;letter-spacing:0.598px">Cut</span>
<span class="ms" style="top:133.90px"><span class="g g2">⌘</span>X</span>
<svg class="i" style="left:313.5px;top:152.00px" width="13" height="13" viewBox="0 0 13 13"><path d="M4.4 0.8H8.6L11.2 3.4V10.4H9" stroke="#9aa0a4" stroke-width="0.9" fill="none"/><path d="M1 3H5.2L7.8 5.6V12.4H1Z" fill="#3c3f41" stroke="#5b9bd3" stroke-width="1"/><path d="M5 3.2V5.8H7.6" stroke="#5b9bd3" stroke-width="0.7" fill="none"/></svg>
<span class="ml" style="top:151.30px;letter-spacing:0.597px">Copy</span>
<span class="ms" style="top:151.00px"><span class="g g2">⌘</span>C</span>
<span class="ml" style="top:167.90px;letter-spacing:0.536px">Copy Path</span>
<span class="ms" style="top:167.60px"><span class="g g1">⇧</span><span class="g g2">⌘</span>C</span>
<span class="ml" style="top:184.50px;letter-spacing:0.457px">Copy as Plain Text</span>
<span class="ml" style="top:201.10px;letter-spacing:0.437px">Copy Reference</span>
<span class="ms" style="top:200.80px"><span class="g g3">⌥</span><span class="g g1">⇧</span><span class="g g2">⌘</span>C</span>
<svg class="i" style="left:313.5px;top:218.70px" width="13" height="13" viewBox="0 0 13 13"><rect x="4" y="1.2" width="7.6" height="9.4" fill="#dea746"/><rect x="5.8" y="0.2" width="4" height="2" fill="#8a6a2a"/><path d="M1 4.2H4.8L7.2 6.6V12.4H1Z" fill="#3c3f41" stroke="#a8acaf" stroke-width="0.9"/></svg>
<span class="ml" style="top:217.70px;letter-spacing:0.350px">Paste</span>
<span class="ms" style="top:217.40px"><span class="g g2">⌘</span>V</span>
<div class="sep" style="top:237.10px"></div>
<span class="ml" style="top:244.00px;letter-spacing:0.338px">Find Usages</span>
<span class="ms" style="top:243.70px"><span class="g g3">⌥</span>F7</span>
<span class="ml" style="top:260.60px;letter-spacing:0.242px">Find in Path...</span>
<span class="ms" style="top:260.30px"><span class="g g1">⇧</span><span class="g g2">⌘</span>F</span>
<span class="ml" style="top:277.20px;letter-spacing:0.322px">Replace in Path...</span>
<span class="ms" style="top:276.90px"><span class="g g1">⇧</span><span class="g g2">⌘</span>R</span>
<span class="ml" style="top:293.80px;letter-spacing:0.548px">Analyze</span>
<svg class="i" style="left:568.6px;top:298.20px" width="7" height="8" viewBox="0 0 7 8"><path d="M0 0.2L6.4 3.7L0 7.2Z" fill="#adadad"/></svg>
<div class="sep" style="top:313.10px"></div>
<span class="ml" style="top:319.70px;letter-spacing:0.500px">Refactor</span>
<svg class="i" style="left:568.6px;top:324.10px" width="7" height="8" viewBox="0 0 7 8"><path d="M0 0.2L6.4 3.7L0 7.2Z" fill="#adadad"/></svg>
<div class="sep" style="top:339.10px"></div>
<span class="ml" style="top:345.60px;letter-spacing:0.446px">Add to Favorites</span>
<svg class="i" style="left:568.6px;top:350.00px" width="7" height="8" viewBox="0 0 7 8"><path d="M0 0.2L6.4 3.7L0 7.2Z" fill="#adadad"/></svg>
<span class="ml" style="top:362.20px;letter-spacing:0.418px">Show Image Thumbnails</span>
<span class="ms" style="top:361.90px"><span class="g g1">⇧</span><span class="g g2">⌘</span>T</span>
<div class="sep" style="top:381.50px"></div>
<span class="ml" style="top:388.40px;letter-spacing:0.399px">Reformat Code</span>
<span class="ms" style="top:388.10px"><span class="g g3">⌥</span><span class="g g2">⌘</span>L</span>
<span class="ml" style="top:405.00px;letter-spacing:0.514px">Optimize Imports</span>
<span class="ms" style="top:404.70px"><span class="g g4">⌃</span><span class="g g3">⌥</span>O</span>
<span class="ml" style="top:421.60px;letter-spacing:0.349px">Delete...</span>
<span class="ms" style="top:421.30px"><span class="g g5">⌦</span></span>
<div class="sep" style="top:440.90px"></div>
<span class="ml" style="top:447.60px;letter-spacing:0.469px">Build Module &#x27;com.demo_test&#x27;</span>
<span class="ml" style="top:464.20px;letter-spacing:0.488px">Rebuild &#x27;com.demo.unit&#x27;</span>
<span class="ms" style="top:463.90px"><span class="g g1">⇧</span><span class="g g2">⌘</span>F9</span>
<svg class="i" style="left:315.0px;top:483.30px" width="10" height="11" viewBox="0 0 10 11"><path d="M0.4 0.4L9.2 5.3L0.4 10.4Z" fill="#3db74b"/></svg>
<span class="ml" style="top:480.80px;letter-spacing:0.467px">Run &#x27;Tests in &#x27;com.demo.unit&#x27;&#x27;</span>
<span class="ms" style="top:480.50px"><span class="g g4">⌃</span><span class="g g1">⇧</span>R</span>
<svg class="i" style="left:312.3px;top:498.90px" width="13" height="13" viewBox="0 0 13 13"><path d="M2 1.4L4.6 4M2 11.6L4.6 9M10.6 1.6L8.6 4.2M10.6 11.4L8.6 8.8M9 6.5H12" stroke="#9da1a4" stroke-width="0.8"/><ellipse cx="5.7" cy="6.5" rx="4" ry="4.3" fill="#3db74b"/><path d="M8.2 4.2Q10.4 4.4 10.4 6.5Q10.4 8.6 8.2 8.8Q7.2 6.5 8.2 4.2Z" fill="#bfc3c6"/></svg>
<span class="ml" style="top:497.40px;letter-spacing:0.533px">Debug &#x27;Tests in &#x27;com.demo.unit&#x27;&#x27;</span>
<span class="ms" style="top:497.10px"><span class="g g4">⌃</span><span class="g g1">⇧</span>D</span>
<svg class="i" style="left:0;top:0" width="975" height="677" viewBox="0 0 975 677"><rect x="311.3" y="513.65" width="267.70" height="16.75" fill="#2f65ca"/></svg>
<svg class="i" style="left:313.5px;top:515.50px" width="13" height="13" viewBox="0 0 13 13"><defs><pattern id="cp" width="1.8" height="1.8" patternUnits="userSpaceOnUse" patternTransform="rotate(45)"><rect width="1.8" height="1.8" fill="#3f6fc4"/><rect width="1.15" height="1.15" fill="#8d969e"/></pattern></defs><path d="M4.4 1.6Q8 0.4 11.4 1.6V7.4Q11.2 10.4 7.9 12Q4.6 10.4 4.4 7.4Z" fill="url(#cp)"/><path d="M0.4 1.9L6.2 6.2L0.4 10.6Z" fill="#3db74b"/></svg>
<span class="ml w" style="top:514.00px;letter-spacing:0.477px">Run &#x27;Tests in &#x27;com.demo.unit&#x27;&#x27; with Coverage</span>
<div class="sep" style="top:533.90px"></div>
<svg class="i" style="left:313.8px;top:542.50px" width="13" height="11" viewBox="0 0 13 11"><rect x="0.5" y="0.5" width="10.4" height="9.6" fill="#2f3233" stroke="#9a9ea1" stroke-width="0.9"/><rect x="0.5" y="0.3" width="10.4" height="1.6" fill="#a8acaf"/><path d="M5.6 3.4L2.4 6L5.6 8.6Z" fill="#e2603f"/><path d="M5.9 3.4L9.2 6L5.9 8.6Z" fill="#3db74b"/></svg>
<span class="ml" style="top:540.20px;letter-spacing:0.484px">Create &#x27;Tests in &#x27;com.demo.unit&#x27;&#x27;...</span>
<span class="ml" style="top:556.80px;letter-spacing:0.489px">Add to temp suite: ArrivalTest and 4 more</span>
<div class="sep" style="top:576.30px"></div>
<span class="ml" style="top:583.00px;letter-spacing:0.409px">Local History</span>
<svg class="i" style="left:568.6px;top:587.40px" width="7" height="8" viewBox="0 0 7 8"><path d="M0 0.2L6.4 3.7L0 7.2Z" fill="#adadad"/></svg>
<span class="ml" style="top:599.60px;letter-spacing:0.106px">Git</span>
<svg class="i" style="left:568.6px;top:604.00px" width="7" height="8" viewBox="0 0 7 8"><path d="M0 0.2L6.4 3.7L0 7.2Z" fill="#adadad"/></svg>
<svg class="i" style="left:312.9px;top:617.50px" width="13" height="13" viewBox="-6.5 -6.5 13 13"><path d="M-4.4 1.4A4.6 4.6 0 0 1 2.6 -3.8" stroke="#55a6e4" stroke-width="1.3" fill="none"/><path d="M4.4 -1.4A4.6 4.6 0 0 1 -2.6 3.8" stroke="#55a6e4" stroke-width="1.3" fill="none"/><path d="M1.4 -6L5 -3.4L1.4 -1.6Z" fill="#55a6e4"/><path d="M-1.4 6L-5 3.4L-1.4 1.6Z" fill="#55a6e4"/></svg>
<span class="ml" style="top:616.20px;letter-spacing:0.474px">Synchronize &#x27;unit&#x27;</span>
<div class="sep" style="top:635.70px"></div>
<span class="ml" style="top:642.40px;letter-spacing:0.292px">Reveal in Finder</span>
<div class="sep" style="top:661.90px"></div>
<svg class="i" style="left:313.5px;top:670.10px" width="13" height="13" viewBox="0 0 13 13"><circle cx="6" cy="6.4" r="5.2" fill="none" stroke="#9da1a4" stroke-width="1"/><path d="M4.4 4V9M7.6 4V9" stroke="#55a6e4" stroke-width="1.2"/></svg>
<span class="ml" style="top:668.60px;letter-spacing:0.470px">Compare With...</span>
<span class="ms" style="top:668.30px"><span class="g g2">⌘</span>D</span>
</div>
<svg class="i" style="left:0;top:0" width="975" height="677" viewBox="0 0 975 677">
<path d="M42.1 335.2L80.2 306.1L82.0 308.4L95.5 292.9L76.9 301.7L78.7 304.0L41.3 334.0Z" fill="#fb2a0c" stroke="#fb2a0c" stroke-width="0.6" stroke-linejoin="round"/>
<path d="M533.2 456.6L514.1 490.2L511.5 489.0L505.9 507.9L519.0 492.6L516.4 491.4L534.4 457.2Z" fill="#fb2a0c" stroke="#fb2a0c" stroke-width="0.6" stroke-linejoin="round"/>
</svg>
</body></html>
